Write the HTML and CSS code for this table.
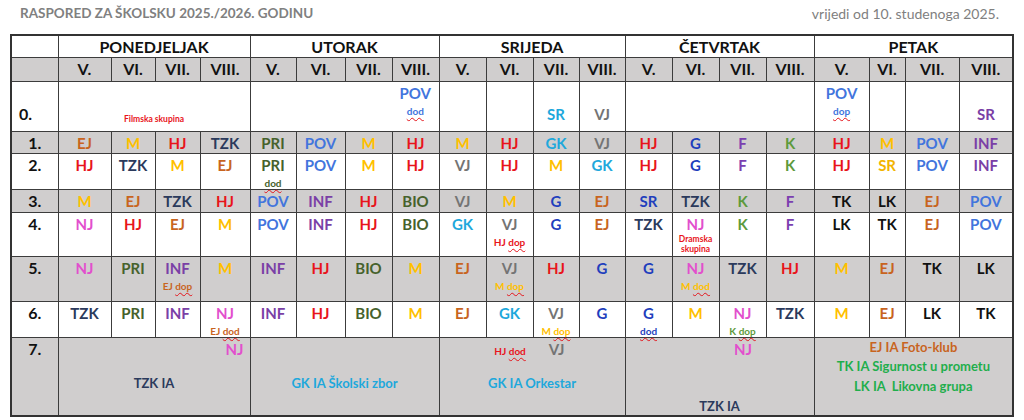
FILE: index.html
```html
<!DOCTYPE html>
<html lang="hr">
<head>
<meta charset="utf-8">
<title>Raspored</title>
<link rel="stylesheet" href="styles.css">
</head>
<body>
<header class="top">
  <h1 class="title">RASPORED ZA ŠKOLSKU 2025./2026. GODINU</h1>
  <p class="valid">vrijedi od 10. studenoga 2025.</p>
</header>
<table class="sched">
  <colgroup>
    <col class="w47">
    <col class="w53"><col class="w44"><col class="w45"><col class="w50">
    <col class="w46"><col class="w49"><col class="w47"><col class="w47">
    <col class="w47"><col class="w47"><col class="w46"><col class="w46">
    <col class="w47"><col class="w47"><col class="w47"><col class="w48">
    <col class="w55"><col class="w36"><col class="w54"><col class="w54">
  </colgroup>
  <tr class="h-day">
    <td></td>
    <th colspan="4">PONEDJELJAK</th>
    <th colspan="4">UTORAK</th>
    <th colspan="4">SRIJEDA</th>
    <th colspan="4">ČETVRTAK</th>
    <th colspan="4">PETAK</th>
  </tr>
  <tr class="h-cls grey">
    <td></td>
    <th>V.</th><th>VI.</th><th>VII.</th><th>VIII.</th>
    <th>V.</th><th>VI.</th><th>VII.</th><th>VIII.</th>
    <th>V.</th><th>VI.</th><th>VII.</th><th>VIII.</th>
    <th>V.</th><th>VI.</th><th>VII.</th><th>VIII.</th>
    <th>V.</th><th>VI.</th><th>VII.</th><th>VIII.</th>
  </tr>
  <tr class="r0">
    <td class="lbl lbl0 bot">0.</td>
    <td colspan="4" class="bot film"><span class="small hjc">Filmska skupina</span></td>
    <td colspan="3" class="nr"></td>
    <td><span class="pov">POV</span><span class="sub pov"><span class="sp">dod</span></span></td>
    <td></td><td></td>
    <td class="bot"><span class="gk">SR</span></td>
    <td class="bot"><span class="vj">VJ</span></td>
    <td colspan="4"></td>
    <td><span class="pov">POV</span><span class="sub pov"><span class="sp">dop</span></span></td>
    <td></td><td></td>
    <td class="bot"><span class="inf">SR</span></td>
  </tr>
  <tr class="r1 grey">
    <td class="lbl">1.</td>
    <td class="ej">EJ</td><td class="m">M</td><td class="hj">HJ</td><td class="tzk">TZK</td>
    <td class="pri">PRI</td><td class="pov">POV</td><td class="m">M</td><td class="hj">HJ</td>
    <td class="m">M</td><td class="hj">HJ</td><td class="gk">GK</td><td class="vj">VJ</td>
    <td class="hj">HJ</td><td class="g">G</td><td class="f">F</td><td class="k">K</td>
    <td class="hj">HJ</td><td class="m">M</td><td class="pov">POV</td><td class="inf">INF</td>
  </tr>
  <tr class="r2">
    <td class="lbl">2.</td>
    <td class="hj">HJ</td><td class="tzk">TZK</td><td class="m">M</td><td class="ej">EJ</td>
    <td class="pri">PRI<span class="sub"><span class="sp">dod</span></span></td><td class="pov">POV</td><td class="m">M</td><td class="hj">HJ</td>
    <td class="vj">VJ</td><td class="hj">HJ</td><td class="m">M</td><td class="gk">GK</td>
    <td class="hj">HJ</td><td class="g">G</td><td class="f">F</td><td class="k">K</td>
    <td class="hj">HJ</td><td class="sry">SR</td><td class="pov">POV</td><td class="inf">INF</td>
  </tr>
  <tr class="r3 grey">
    <td class="lbl">3.</td>
    <td class="m">M</td><td class="ej">EJ</td><td class="tzk">TZK</td><td class="hj">HJ</td>
    <td class="pov">POV</td><td class="inf">INF</td><td class="hj">HJ</td><td class="pri">BIO</td>
    <td class="vj">VJ</td><td class="m">M</td><td class="g">G</td><td class="ej">EJ</td>
    <td class="g">SR</td><td class="tzk">TZK</td><td class="k">K</td><td class="f">F</td>
    <td class="blk">TK</td><td class="blk">LK</td><td class="ej">EJ</td><td class="pov">POV</td>
  </tr>
  <tr class="r4">
    <td class="lbl">4.</td>
    <td class="nj">NJ</td><td class="hj">HJ</td><td class="ej">EJ</td><td class="m">M</td>
    <td class="pov">POV</td><td class="inf">INF</td><td class="hj">HJ</td><td class="pri">BIO</td>
    <td class="gk">GK</td><td class="vj">VJ<span class="sub hjc">HJ <span class="sp">dop</span></span></td><td class="g">G</td><td class="ej">EJ</td>
    <td class="tzk">TZK</td><td class="nj">NJ<span class="drama hjc">Dramska skupina</span></td><td class="k">K</td><td class="f">F</td>
    <td class="blk">LK</td><td class="blk">TK</td><td class="ej">EJ</td><td class="pov">POV</td>
  </tr>
  <tr class="r5 grey">
    <td class="lbl">5.</td>
    <td class="nj">NJ</td><td class="pri">PRI</td><td class="inf">INF<span class="sub ej">EJ <span class="sp">dop</span></span></td><td class="m">M</td>
    <td class="inf">INF</td><td class="hj">HJ</td><td class="pri">BIO</td><td class="m">M</td>
    <td class="ej">EJ</td><td class="vj">VJ<span class="sub m">M <span class="sp">dop</span></span></td><td class="hj">HJ</td><td class="g">G</td>
    <td class="g">G</td><td class="nj">NJ<span class="sub m">M <span class="sp">dod</span></span></td><td class="tzk">TZK</td><td class="hj">HJ</td>
    <td class="m">M</td><td class="ej">EJ</td><td class="blk">TK</td><td class="blk">LK</td>
  </tr>
  <tr class="r6">
    <td class="lbl">6.</td>
    <td class="tzk">TZK</td><td class="pri">PRI</td><td class="inf">INF</td><td class="nj">NJ<span class="sub ej">EJ <span class="sp">dod</span></span></td>
    <td class="inf">INF</td><td class="hj">HJ</td><td class="pri">BIO</td><td class="m">M</td>
    <td class="ej">EJ</td><td class="gk">GK</td><td class="vj">VJ<span class="sub m">M <span class="sp">dop</span></span></td><td class="g">G</td>
    <td class="g">G<span class="sub"><span class="sp">dod</span></span></td><td class="m">M</td><td class="nj">NJ<span class="sub k">K <span class="sp">dop</span></span></td><td class="tzk">TZK</td>
    <td class="m">M</td><td class="ej">EJ</td><td class="blk">LK</td><td class="blk">TK</td>
  </tr>
  <tr class="r7 grey">
    <td class="lbl">7.</td>
    <td colspan="4">
      <div class="line1 right"><span class="nj">NJ</span></div>
      <div class="ia tzk">TZK IA</div>
    </td>
    <td colspan="4">
      <div class="line1"></div>
      <div class="ia gk">GK IA Školski zbor</div>
    </td>
    <td colspan="4">
      <div class="line1 quad wed">
        <span></span>
        <span class="small7 hjc">HJ <span class="sp">dod</span></span>
        <span class="vj">VJ</span>
        <span></span>
      </div>
      <div class="ia gk">GK IA Orkestar</div>
    </td>
    <td colspan="4">
      <div class="line1 quad thu">
        <span></span><span></span>
        <span class="nj">NJ</span>
        <span></span>
      </div>
      <div class="ia ia-low tzk">TZK IA</div>
    </td>
    <td colspan="4" class="fri7">
      <p class="ej">EJ IA Foto-klub</p>
      <p class="grn">TK IA Sigurnost u prometu</p>
      <p class="grn">LK IA&nbsp; Likovna grupa</p>
    </td>
  </tr>
</table>
</body>
</html>
```

FILE: styles.css
```css
* { box-sizing: border-box; margin: 0; padding: 0; }

body {
  background: #ffffff;
  font-family: "Lato", "Liberation Sans", sans-serif;
  width: 1024px;
  height: 420px;
  overflow: hidden;
}

.top {
  display: flex;
  justify-content: space-between;
  align-items: center;
  height: 34px;
  padding: 0 25px 8px 20px;
}

.title {
  font-size: 13.5px;
  font-weight: 700;
  color: #808080;
}

.valid {
  font-size: 14px;
  color: #808080;
}

.sched {
  margin-left: 10px;
  width: 1002px;
  table-layout: fixed;
  border-collapse: collapse;
  border: 2px solid #333;
}

.w36 { width: 36px; }
.w44 { width: 44px; }
.w45 { width: 45px; }
.w46 { width: 46px; }
.w47 { width: 47px; }
.w48 { width: 48px; }
.w49 { width: 49px; }
.w50 { width: 50px; }
.w53 { width: 53px; }
.w54 { width: 54px; }
.w55 { width: 55px; }

.sched td,
.sched th {
  border: 1px solid #3c3c3c;
  padding: 2px 0 0;
  text-align: center;
  vertical-align: top;
  font-weight: 700;
  font-size: 15px;
  line-height: 18px;
  overflow: visible;
  white-space: nowrap;
}

.sched th { font-size: 16px; color: #111; }
.h-day th { font-size: 16px; }

.grey td, .grey th { background: #d0cece; }

.h-day { height: 22px; }
.h-cls { height: 24px; }
.r0 { height: 50px; }
.r1 { height: 22px; }
.r2 { height: 36px; }
.r3 { height: 23px; }
.r4 { height: 44px; }
.r5 { height: 45px; }
.r6 { height: 36px; }
.r7 { height: 76px; }

.sched .lbl { font-size: 16px; color: #111; }
.sched .lbl0 { text-align: left; padding-left: 7px; }

.sched .bot { vertical-align: bottom; padding-bottom: 8px; }
.sched .film { padding-bottom: 6px; }
.sched .nr { border-right-style: hidden; }

.sub {
  display: block;
  font-size: 10px;
  line-height: 12px;
  margin-top: 3px;
}

.drama {
  display: block;
  font-size: 8.5px;
  line-height: 10.5px;
  margin-top: 1px;
  white-space: normal;
}

.small { font-size: 8.5px; line-height: 12px; display: block; }

.sp {
  text-decoration: underline wavy #e4141b;
  text-decoration-thickness: 1px;
  text-underline-offset: 2px;
  text-decoration-skip-ink: none;
}

/* colours */
.ej { color: #c8641e; }
.m { color: #ffc000; }
.hj, .hjc { color: #e8141b; }
.tzk { color: #2b3a5c; }
.pri { color: #46622c; }
.pov { color: #4275dd; }
.gk { color: #1ea8dc; }
.vj { color: #747474; }
.g { color: #1f3fbd; }
.f { color: #7b3fb0; }
.k { color: #5d9a3c; }
.inf { color: #7a3fa6; }
.nj { color: #e24fcd; }
.blk { color: #111; }
.sry { color: #f2b400; }
.grn { color: #1fae4c; }

/* row 7 */
.line1 { height: 18px; line-height: 18px; font-size: 15px; }
.line1.right { text-align: right; padding-right: 6px; }
.quad { display: grid; align-items: end; }
.wed { grid-template-columns: 47px 47px 46px 46px; }
.thu { grid-template-columns: 47px 47px 47px 48px; }
.small7 { font-size: 10px; line-height: 14px; }

.ia {
  font-size: 13px;
  line-height: 18px;
  margin-top: 16px;
}
.ia-low { margin-top: 39px; }

.sched .fri7 {
  padding-top: 0;
}
.fri7 p {
  font-size: 13px;
  line-height: 19.5px;
}
```
